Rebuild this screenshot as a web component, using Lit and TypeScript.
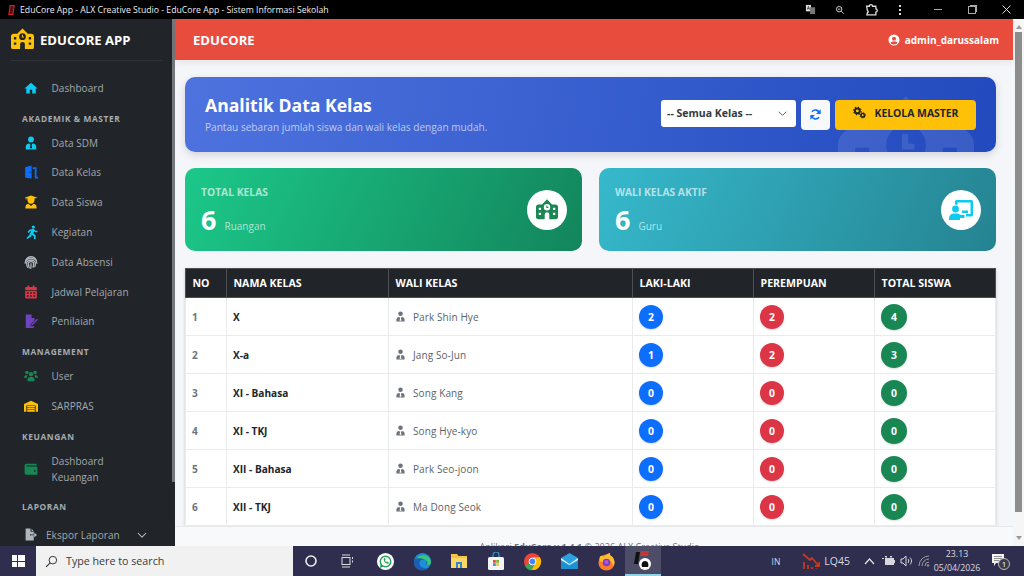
import { LitElement, html, css, svg } from "lit";
import { customElement } from "lit/decorators.js";

const icons: Record<string, unknown> = {
  home: svg`<path d="M12 3 .8 13h3.1v8.500h6V15h4.200v6.500h6V13h3.100z"/>`,
  tie: svg`<circle cx="12" cy="6" r="5"/><path d="M3 23v-4c0-3.500 2.500-6 6-6h.5l1.500 2.500-1 5.500h4l-1-5.500 1.500-2.500h.5c3.500 0 6 2.500 6 6v4z"/>`,
  door: svg`<path d="M2 22V4l11-3v22zM9.500 11v2.500h1.500V11z" fill-rule="evenodd"/><path d="M15 4h6.500v16H24v3h-5.500V7H15z"/>`,
  grad: svg`<path d="M12 1 1 4.500l2 .7v3h1V5.500l2 .6v3c0 3 2.500 5.900 6 5.900s6-2.900 6-5.900v-3l5-1.600z"/><path d="M2.500 23v-2.500c0-3 2-5 5-5.500l4.500 4 4.500-4c3 .5 5 2.500 5 5.500V23z"/>`,
  run: svg`<circle cx="16" cy="3.500" r="2.800"/><path d="m14 7-5 1-3 4 2 1.500 2.300-3 2-.4-2.800 6.400L4 22.500 6 24l6-4.500 1.500-3 3.500 3V24h3v-6l-4-4 1.600-3.500 1.400 2H23v-2.500h-3.500L17 7z"/>`,
  finger: svg`<g fill="none" stroke="currentColor" stroke-width="2.200" stroke-linecap="round"><path d="M3 9c2-4 5-6 9-6s7 2 9 6"/><path d="M2 14c0-6 4-8 10-8s10 2 10 8"/><path d="M6 21c-1-3-1.500-5-1.500-7 0-3.500 3-5 7.500-5s7.500 1.500 7.500 5c0 2-.3 4-1 6"/><path d="M9 22c-1-3-1.500-5.500-1.500-8 0-1.500 2-2.500 4.500-2.500s4.500 1 4.500 3c0 2-.2 4-1 6.500"/><path d="M12 15c0 3 .2 5-.5 8"/></g>`,
  cal: svg`<path fill-rule="evenodd" d="M6 1h3v2.500h6V1h3v2.500h2.500A1.500 1.500 0 0 1 22 5v3.500H2V5a1.500 1.500 0 0 1 1.500-1.500H6zM2 10h20v11.500A1.500 1.500 0 0 1 20.500 23h-17A1.500 1.500 0 0 1 2 21.500zM5 12.500v2.500h3v-2.500zm5.500 0v2.500h3v-2.500zm5.500 0v2.500h3v-2.500zM5 17.500V20h3v-2.500zm5.500 0V20h3v-2.500zm5.500 0V20h3v-2.500z"/>`,
  sign: svg`<path d="M3 1h10v6h5v3.500l-6 6-1.500 4.500H17v3H3z"/><path d="m13 17 9-9 2 2-9 9-3 1z"/>`,
  users: svg`<circle cx="5" cy="6" r="3"/><circle cx="19" cy="6" r="3"/><circle cx="12" cy="9" r="3.700"/><path d="M0 15c0-3 1.500-4.500 3.500-4.500h3c-1 1-1.500 2.500-1.500 4.500zM24 15c0-3-1.500-4.500-3.500-4.500h-3c1 1 1.500 2.500 1.500 4.500zM6 21v-3c0-3 2-4.500 4-4.500h4c2 0 4 1.500 4 4.500v3z"/>`,
  ware: svg`<path d="M0 22V8.500L12 3l12 5.500V22h-4V11H4v11z"/><path d="M5.500 12h13v2.500h-13zM5.500 15.500h13V18h-13zM5.500 19h13v3h-13z"/>`,
  wallet: svg`<path fill-rule="evenodd" d="M4 3h16a2 2 0 0 1 2 2v1H4v1.500h17A2 2 0 0 1 23 9.500V20a2 2 0 0 1-2 2H4a3 3 0 0 1-3-3V6a3 3 0 0 1 3-3zM18.500 13.500a1.500 1.500 0 1 0 0 3 1.500 1.500 0 0 0 0-3z"/>`,
  fileExp: svg`<path d="M3 1h9v6h6v4h-6.500v3H18v9H3z"/><path d="M14 1.500 18 6h-4zM13 12h6V8.500l5 4.500-5 4.500V14h-6z"/>`,
  chev: svg`<path d="m3 8 9 9 9-9" fill="none" stroke="currentColor" stroke-width="2.500" stroke-linecap="round" stroke-linejoin="round"/>`,
  sync: svg`<path d="M19.800 10A8.200 8.200 0 0 0 5.500 6.800M4.200 14A8.200 8.200 0 0 0 18.500 17.200" fill="none" stroke="currentColor" stroke-width="3"/><path d="M21.500 2.500v8.500H13zM2.500 21.500V13H11z"/>`,
  gears: svg`<circle cx="8" cy="9" r="4.500" fill="none" stroke="currentColor" stroke-width="3.500"/><circle cx="8" cy="9" r="7" fill="none" stroke="currentColor" stroke-width="2" stroke-dasharray="2.500 3"/><circle cx="18" cy="17" r="3.200" fill="none" stroke="currentColor" stroke-width="3"/><circle cx="18" cy="17" r="5.300" fill="none" stroke="currentColor" stroke-width="1.500" stroke-dasharray="2 2.200"/>`,
  userCircle: svg`<path fill-rule="evenodd" d="M12 1a11 11 0 1 0 0 22 11 11 0 0 0 0-22zm0 4.500a4 4 0 1 1 0 8 4 4 0 0 1 0-8zm0 15.500a9 9 0 0 1-6.800-3.100c.8-1.800 2.500-2.900 4.300-2.900h5c1.800 0 3.500 1.100 4.300 2.900A9 9 0 0 1 12 21z"/>`,
  school: svg`<path fill-rule="evenodd" d="M12 .4 6.500 6H3a3 3 0 0 0-3 3v11a2 2 0 0 0 2 2h7.500v-5a2.500 2.500 0 0 1 5 0v5H22a2 2 0 0 0 2-2V9a3 3 0 0 0-3-3h-3.500zM12 5.500a3.500 3.500 0 1 1 0 7 3.500 3.500 0 0 1 0-7zM11.300 7v2.800h2.200V8.800h-1.100V7zM3 9.500V12h2.500V9.500zm15.500 0V12H21V9.500zM3 15v2.500h2.500V15zm15.500 0v2.500H21V15z"/>`,
  teacher: svg`<circle cx="6.500" cy="11" r="3.400"/><path d="M0 22v-1.500C0 17.500 2 15.500 4.500 15.500h4l4 1.500h3v3H11V22z"/><path d="M6 6.500V3.500A1.500 1.500 0 0 1 7.500 2H22.500A1.500 1.500 0 0 1 24 3.500V17a1.500 1.500 0 0 1-1.500 1.500H17V16h4.500V4.500H8.500v2.500z"/><path d="M13 12.500h6V15h-6z"/>`,
  search: svg`<circle cx="14.500" cy="9.500" r="7" fill="none" stroke="currentColor" stroke-width="1.800"/><path d="M9.500 14.500 2 22" stroke="currentColor" stroke-width="2"/>`,
  zoom: svg`<circle cx="10" cy="10" r="6.500" fill="none" stroke="currentColor" stroke-width="2.200"/><path d="M15 15l6 6M7 10h6" stroke="currentColor" stroke-width="2.200"/>`,
  ext: svg`<path d="M3 6h5c0-4 6-4 6 0h6v5c3.500 0 3.500 6 0 6v5H3.500l1-4c2 0 2-4 0-4z" fill="none" stroke="currentColor" stroke-width="2.400"/>`,
  translate: svg`<path d="M2 2h11v14H2z"/><path d="M11 7h11v15H11z" fill="#777"/><path d="M5 12l2.500-7L10 12M6 10h3" fill="none" stroke="#111" stroke-width="1.300"/>`,
};

const ic = (name: string, size: number, color = "currentColor") => html`<svg
  class="ic"
  viewBox="0 0 24 24"
  width=${size}
  height=${size}
  fill="currentColor"
  style="color:${color}"
>${icons[name]}</svg>`;

type NavItem = { label?: string; section?: string; icon?: string; color?: string; lines?: string[] };

const nav: NavItem[] = [
  { label: "Dashboard", icon: "home", color: "#0dcaf0" },
  { section: "AKADEMIK & MASTER" },
  { label: "Data SDM", icon: "tie", color: "#0dcaf0" },
  { label: "Data Kelas", icon: "door", color: "#0d6efd" },
  { label: "Data Siswa", icon: "grad", color: "#ffc107" },
  { label: "Kegiatan", icon: "run", color: "#0dcaf0" },
  { label: "Data Absensi", icon: "finger", color: "#adb5bd" },
  { label: "Jadwal Pelajaran", icon: "cal", color: "#dc3545" },
  { label: "Penilaian", icon: "sign", color: "#6f42c1" },
  { section: "MANAGEMENT" },
  { label: "User", icon: "users", color: "#198754" },
  { label: "SARPRAS", icon: "ware", color: "#ffc107" },
  { section: "KEUANGAN" },
  { icon: "wallet", color: "#198754", lines: ["Dashboard", "Keuangan"] },
  { section: "LAPORAN" },
];

const rows = [
  [1, "X", "Park Shin Hye", 2, 2, 4],
  [2, "X-a", "Jang So-Jun", 1, 2, 3],
  [3, "XI - Bahasa", "Song Kang", 0, 0, 0],
  [4, "XI - TKJ", "Song Hye-kyo", 0, 0, 0],
  [5, "XII - Bahasa", "Park Seo-joon", 0, 0, 0],
  [6, "XII - TKJ", "Ma Dong Seok", 0, 0, 0],
];

@customElement("app-root")
export class AppRoot extends LitElement {
  static override styles = css`
    :host {
      display: block;
      width: 1024px;
      height: 576px;
      overflow: hidden;
      font-family: "Open Sans", "Noto Sans", sans-serif;
      color: #212529;
      background: #f4f6f9;
    }
    .ic {
      display: block;
      flex: none;
    }
    .chrome {
      height: 19px;
      background: #000;
      color: #eee;
      display: flex;
      align-items: center;
      padding-left: 9px;
      font-size: 8.700px;
      box-sizing: border-box;
    }
    .chrome .favicon {
      width: 5px;
      height: 10px;
      border: 1.500px solid #d8232a;
      background: #5a0f12;
      box-sizing: border-box;
      margin-right: 6px;
      transform: skewX(-8deg);
    }
    .chrome .actions {
      margin-left: auto;
      display: flex;
      align-items: center;
      color: #ddd;
    }
    .chrome .slot {
      display: flex;
      justify-content: center;
      align-items: center;
    }
    .dots {
      display: flex;
      flex-direction: column;
      gap: 2px;
    }
    .dots i {
      width: 2px;
      height: 2px;
      background: #ddd;
    }
    .min {
      width: 8px;
      height: 1px;
      background: #aaa;
    }
    .restore {
      width: 6px;
      height: 6px;
      border: 1px solid #aaa;
      box-shadow: 1.500px -1.500px 0 -0.500px #aaa;
    }
    .middle {
      height: 527px;
      display: flex;
      overflow: hidden;
    }
    .sidebar {
      width: 172px;
      flex: none;
      background: #212529;
      color: #adb5bd;
      overflow: hidden;
      box-sizing: border-box;
    }
    .sbar {
      width: 3px;
      flex: none;
      background: #212529;
    }
    .sbar i {
      display: block;
      height: 463px;
      background: #74787c;
    }
    .brand {
      height: 42px;
      margin: 0 10px 0 11px;
      display: flex;
      align-items: center;
      gap: 6px;
      border-bottom: 1px solid #2f3338;
      color: #fff;
      font-size: 13.100px;
      font-weight: 700;
      box-sizing: border-box;
    }
    .nav {
      padding-top: 12px;
    }
    .section {
      height: 17px;
      margin: 8px 0 0 22px;
      font-size: 8.400px;
      font-weight: 700;
      letter-spacing: 0.600px;
      line-height: 16px;
      color: #a5abb1;
    }
    .item {
      min-height: 29.800px;
      display: flex;
      align-items: center;
      font-size: 10px;
      letter-spacing: 0.050px;
      color: #a2a8ae;
      padding-left: 22px;
    }
    .item .icw {
      width: 18px;
      display: flex;
      justify-content: center;
      margin-right: 11.500px;
    }
    .item.two {
      padding: 7px 0 6px 22px;
      line-height: 16px;
    }
    .item.export {
      padding-left: 24px;
      margin-top: 4px;
    }
    .item.export .icw {
      width: 13px;
      margin-right: 9px;
    }
    .item.export .arrow {
      margin-left: 17px;
    }
    .main {
      flex: 1;
      min-width: 0;
      display: flex;
      flex-direction: column;
      position: relative;
      background: #f4f6f9;
    }
    .topbar {
      height: 41px;
      flex: none;
      background: #e74c3c;
      color: #fff;
      display: flex;
      align-items: center;
      justify-content: space-between;
      padding: 0 14px 0 18px;
      box-shadow: 0 2px 8px rgba(0, 0, 0, 0.08);
    }
    .topbar b {
      font-size: 13.100px;
    }
    .who {
      display: flex;
      align-items: center;
      gap: 5px;
      font-size: 10px;
      font-weight: 700;
    }
    .content {
      flex: 1;
      padding: 17px 17px 0 10px;
      display: flex;
      flex-direction: column;
    }
    .hero {
      height: 75px;
      flex: none;
      box-sizing: border-box;
      border-radius: 10px;
      background: linear-gradient(100deg, #4e73df, #224abe);
      box-shadow: 0 3px 8px rgba(0, 0, 0, 0.14);
      color: #fff;
      display: flex;
      align-items: center;
      justify-content: space-between;
      padding: 0 20px;
      position: relative;
      overflow: hidden;
    }
    .hero .intro {
      margin-bottom: 2px;
      position: relative;
    }
    .hero h1 {
      margin: 0 0 2px;
      font-size: 17.600px;
      line-height: 25px;
      font-weight: 700;
    }
    .hero p {
      margin: 0;
      font-size: 10.100px;
      color: rgba(255, 255, 255, 0.65);
    }
    .watermark {
      position: absolute;
      right: 22px;
      top: 17px;
      color: rgba(255, 255, 255, 0.1);
    }
    .tools {
      display: flex;
      align-items: flex-start;
      gap: 5px;
      position: relative;
    }
    .select {
      width: 135px;
      height: 27px;
      box-sizing: border-box;
      background: #fff;
      border-radius: 3px;
      color: #343a40;
      display: flex;
      align-items: center;
      justify-content: space-between;
      padding: 0 9px 0 6px;
      font-size: 10.500px;
      font-weight: 700;
    }
    .refresh {
      width: 29px;
      height: 30px;
      background: #f8f9fa;
      border-radius: 4px;
      display: flex;
      align-items: center;
      justify-content: center;
    }
    .master {
      width: 141px;
      height: 30px;
      box-sizing: border-box;
      padding-bottom: 4px;
      background: #ffc107;
      border-radius: 4px;
      color: #212529;
      display: flex;
      align-items: center;
      justify-content: center;
      gap: 9px;
      font-size: 10.400px;
      font-weight: 700;
    }
    .stats {
      display: grid;
      grid-template-columns: 1fr 1fr;
      gap: 17px;
      margin-top: 16px;
      flex: none;
    }
    .stat {
      height: 83px;
      box-sizing: border-box;
      border-radius: 10px;
      color: #fff;
      padding: 0 15px 0 16px;
      display: flex;
      align-items: center;
      justify-content: space-between;
    }
    .stat.green {
      background: linear-gradient(115deg, #1cc88a, #13855c);
    }
    .stat.teal {
      background: linear-gradient(115deg, #36b9cc, #258391);
    }
    .stat .txt {
      padding-top: 11px;
    }
    .stat small {
      display: block;
      font-size: 10.300px;
      font-weight: 700;
      line-height: 13px;
      color: rgba(255, 255, 255, 0.65);
      margin-bottom: 2px;
    }
    .stat .num {
      display: flex;
      align-items: baseline;
      gap: 8px;
      font-size: 27px;
      line-height: 38px;
      font-weight: 700;
    }
    .stat .num span {
      font-size: 10px;
      font-weight: 400;
      color: rgba(255, 255, 255, 0.65);
    }
    .disc {
      width: 40px;
      height: 40px;
      border-radius: 50%;
      background: #fff;
      display: flex;
      align-items: center;
      justify-content: center;
    }
    table {
      margin: 17px 0 0 0;
      width: 810px;
      border-collapse: collapse;
      table-layout: fixed;
      background: #fff;
      box-shadow: 0 1px 3px rgba(0, 0, 0, 0.18);
      flex: none;
    }
    th {
      height: 29px;
      box-sizing: border-box;
      background: #212529;
      color: #fff;
      border: 1px solid #4d5154;
      text-align: left;
      font-size: 10.600px;
      font-weight: 700;
      padding: 0 6.500px;
    }
    td {
      height: 38px;
      box-sizing: border-box;
      border: 1px solid #e9ebec;
      padding: 0 6px;
      font-size: 10.100px;
    }
    td.no {
      font-weight: 700;
      color: #6c757d;
    }
    td.name {
      font-weight: 700;
      color: #212529;
    }
    .wali {
      display: flex;
      align-items: center;
      gap: 7px;
      color: #5c636a;
      font-size: 10px;
      letter-spacing: 0.100px;
    }
    .badge {
      width: 24px;
      height: 24px;
      border-radius: 50%;
      color: #fff;
      font-weight: 700;
      font-size: 10.400px;
      display: flex;
      align-items: center;
      justify-content: center;
      box-shadow: 0 1px 2px rgba(0, 0, 0, 0.15);
    }
    .badge.total {
      width: 26px;
      height: 26px;
    }
    .footer {
      position: absolute;
      left: 0;
      right: 0;
      top: 507px;
      height: 20px;
      box-sizing: border-box;
      border-top: 1px solid #e6e8ea;
      padding-right: 9px;
      text-align: center;
      font-size: 9.050px;
      line-height: 40px;
      overflow: hidden;
      color: #6c757d;
      background: #f8f9fa;
    }
    .vscroll {
      width: 11px;
      flex: none;
      background: #f6f6f6;
      display: flex;
      flex-direction: column;
      align-items: center;
      padding-top: 6px;
      box-sizing: border-box;
    }
    .vscroll i {
      display: block;
      width: 7px;
      height: 480px;
      margin-top: 3px;
      background: #8d8d8d;
    }
    .tri {
      width: 0;
      height: 0;
      border-left: 3.500px solid transparent;
      border-right: 3.500px solid transparent;
    }
    .tri.up {
      border-bottom: 4px solid #9a9a9a;
    }
    .tri.down {
      border-top: 4px solid #9a9a9a;
      margin-top: 24px;
    }
    .taskbar {
      height: 30px;
      background: #2f2e4e;
      color: #e6e6ea;
      display: flex;
      align-items: center;
    }
    .start {
      width: 36px;
      display: flex;
      justify-content: center;
    }
    .win {
      display: grid;
      grid-template-columns: 5.500px 6.500px;
      grid-template-rows: 5.500px 5.500px;
      gap: 1px;
    }
    .win i {
      background: #fff;
    }
    .searchbox {
      width: 257px;
      height: 30px;
      background: #f1f1f1;
      color: #3b3b3b;
      display: flex;
      align-items: center;
      gap: 8px;
      padding-left: 9px;
      box-sizing: border-box;
      font-size: 10.700px;
    }
    .apps {
      display: flex;
    }
    .app {
      width: 36.800px;
      height: 30px;
      display: flex;
      align-items: center;
      justify-content: center;
      box-sizing: border-box;
    }
    .app.sys {
      width: 36px;
    }
    .app.first {
      margin-left: 2px;
    }
    .app.on {
      background: #4e4d68;
      border-bottom: 2px solid #8fd3e8;
    }
    .tray {
      margin-left: auto;
      display: flex;
      align-items: center;
      height: 30px;
      font-size: 9px;
      color: #d9d9e0;
    }
    .tray .lang {
      margin-right: 22px;
      font-size: 8.500px;
    }
    .tray .t1 {
      margin-left: 7px;
    }
    .tray .t2 {
      margin-left: 5px;
    }
    .tray .t3 {
      margin-left: 5px;
    }
    .tray .note {
      margin: 0 13px 0 9px;
    }
    .clock {
      width: 50px;
      margin-left: 1px;
      text-align: center;
      font-size: 8.800px;
      line-height: 14px;
    }
    .lq {
      font-size: 10.500px;
      margin: 0 14px 0 4px;
    }
  `;

  private renderNav(n: NavItem) {
    if (n.section) return html`<div class="section">${n.section}</div>`;
    return html`<div class="item ${n.lines ? "two" : ""}">
      <span class="icw">${ic(n.icon!, 14, n.color)}</span>
      <span>${n.lines ? html`${n.lines[0]}<br />${n.lines[1]}` : n.label}</span>
    </div>`;
  }

  private renderTaskApps() {
    return html`<div class="apps">
      <div class="app sys">
        <svg width="14" height="14" viewBox="0 0 14 14"><circle cx="7" cy="7" r="5" fill="none" stroke="#eee" stroke-width="1.600" /></svg>
      </div>
      <div class="app sys">
        <svg width="14" height="14" viewBox="0 0 14 14" fill="none" stroke="#ddd"><path d="M2 1h8M2 13h8" /><rect x="2" y="3.500" width="8" height="7" /><path d="M12.500 3v2M12.500 6.500v2" /></svg>
      </div>
      <div class="app first">
        <svg width="19" height="19" viewBox="0 0 20 20"><circle cx="10" cy="10" r="9" fill="#fff" /><circle cx="10" cy="10" r="5.500" fill="none" stroke="#25a35a" stroke-width="1.500" /><path d="M4 17l1-4 3 2z" fill="#25a35a" /><path d="M8 7c0 3 2 5 5 5.500l.5-1.500-2-1-1 .5-1-1.500.5-1-1-2z" fill="#25a35a" /></svg>
      </div>
      <div class="app">
        <svg width="19" height="19" viewBox="0 0 20 20"><circle cx="10" cy="10" r="9" fill="#1f8fd6" /><path d="M1 10C3 3 15 1 19 10c0 3-3 4-6 3 2-1 2-4-1-5C8 7 5 11 8 15c2 2 6 3 9 1-3 3-7 4-10 3-4-1-7-5-6-9z" fill="#1a5fb4" /><path d="M19 11c0 2-2 3-5 2.500 1.500-1 1.500-3 .5-4C12 7 5 5 3 8c3-7 16-6 16 3z" fill="#38c77b" /></svg>
      </div>
      <div class="app">
        <svg width="18" height="16" viewBox="0 0 18 16"><path d="M1 1h6l1.500 2H17v12H1z" fill="#f6c445" /><path d="M1 5h16v10H1z" fill="#fbd866" /><rect x="6" y="9" width="6" height="6" fill="#2b88d8" /><rect x="8" y="11" width="2" height="4" fill="#fbd866" /></svg>
      </div>
      <div class="app">
        <svg width="18" height="19" viewBox="0 0 18 19"><path d="M6 5V3a3 3 0 0 1 6 0v2" fill="none" stroke="#2b9fd8" stroke-width="1.200" /><rect x="1" y="5" width="16" height="13" rx="1.500" fill="#f4f4f4" /><rect x="6" y="8" width="2.800" height="2.800" fill="#e74c3c" /><rect x="9.200" y="8" width="2.800" height="2.800" fill="#7cb82f" /><rect x="6" y="11.200" width="2.800" height="2.800" fill="#2b9fd8" /><rect x="9.200" y="11.200" width="2.800" height="2.800" fill="#f6c445" /></svg>
      </div>
      <div class="app">
        <svg width="19" height="19" viewBox="0 0 20 20"><circle cx="10" cy="10" r="9" fill="#e8453c" /><path d="M2 14.500 6 12a4.500 4.500 0 0 0 6 2l-3 5.500a9 9 0 0 1-7-5z" fill="#34a853" /><path d="M10 5.500h7.800A9 9 0 0 1 9 19l4-7a4.500 4.500 0 0 0-3-6.500z" fill="#fbbc05" /><circle cx="10" cy="10" r="3.600" fill="#4285f4" stroke="#fff" /></svg>
      </div>
      <div class="app">
        <svg width="19" height="16" viewBox="0 0 19 16"><path d="M1 5 9.500 0 18 5v11H1z" fill="#2ba3e3" /><path d="M1 5l8.500 6L18 5v2l-8.500 5L1 7z" fill="#d9f1fb" /><path d="M1 8l8.500 5L18 8v8H1z" fill="#1e8fd0" /></svg>
      </div>
      <div class="app">
        <svg width="19" height="19" viewBox="0 0 20 20"><circle cx="10" cy="11" r="8.500" fill="#ff7a2a" /><path d="M3 5c2-2 3-1 4 0 2-2 5-4 7-4-1 2 0 3 2 4 3 3 3 8 1 10-1-5-4-8-8-7-3 1-3 3-3 3-3-1-4-3-3-6z" fill="#ffbd2e" /><circle cx="10" cy="11" r="4" fill="#7542c9" /><circle cx="10" cy="10.500" r="2" fill="#c04fd1" /></svg>
      </div>
      <div class="app on">
        <svg width="20" height="22" viewBox="0 0 20 22"><path d="M3 3h4l-2 12H1z" fill="#111" /><path d="M8 2h8l-1 5H7z" fill="#c7362f" /><circle cx="12" cy="15" r="6" fill="#fff" /><path d="M12 12c3 0 4 3 3 6h-6c-1-3 0-6 3-6z" fill="#111" /></svg>
      </div>
    </div>`;
  }

  private renderTray() {
    return html`<div class="tray">
      <span class="lang">IN</span>
      <svg width="18" height="18" viewBox="0 0 18 18" fill="none" stroke="#c8381f" stroke-width="1.800"><path d="M1 2l7 6 2-2 6 7" /><path d="M13 14h4v-4" /><path d="M2 17v-7M6 17v-4M10 17v-2M14 17v-.5" /></svg>
      <span class="lq">LQ45</span>
      <svg width="11" height="8" viewBox="0 0 11 8" fill="none" stroke="#e6e6ea" stroke-width="1.200"><path d="M1 7l4.500-5L10 7" /></svg>
      <svg class="t1" width="13" height="10" viewBox="0 0 13 10" fill="#d8d8de"><path d="M0 2h2v1H0zM3 2h9v7H3zM12 4h1v3h-1zM3 0h2v1.500H3zM8 0h2v1.500H8z" /></svg>
      <svg class="t2" width="13" height="12" viewBox="0 0 13 12" fill="none" stroke="#d8d8de"><path d="M1 4v4h2l3 3V1L3 4z" /><path d="M8 4c1 1 1 3 0 4M10 2.500c2 2 2 5 0 7" /></svg>
      <svg class="t3" width="13" height="12" viewBox="0 0 13 12" fill="none" stroke="#9a9aa5"><path d="M1 11a10 10 0 0 1 10-10M4 11a7 7 0 0 1 7-7M7 11a4 4 0 0 1 4-4" /><circle cx="10" cy="10.500" r=".8" fill="#9a9aa5" /></svg>
      <div class="clock">23.13<br />05/04/2026</div>
      <svg class="note" width="20" height="18" viewBox="0 0 20 18"><path d="M1 2h12v9H5l-2 3v-3H1z" fill="#f2f2f2" /><path d="M3 4.500h8M3 6.500h8M3 8.500h5" stroke="#777" stroke-width=".8" /><circle cx="13" cy="12" r="5.500" fill="#3a3a50" stroke="#bbb" /><text x="13" y="15" text-anchor="middle" font-size="8" fill="#fff" font-family="Open Sans, sans-serif">1</text></svg>
    </div>`;
  }

  override render() {
    return html`
      <div class="chrome">
        <span class="favicon"></span>
        <span>EduCore App - ALX Creative Studio - EduCore App - Sistem Informasi Sekolah</span>
        <div class="actions">
          <span class="slot" style="width:14px">${ic("translate", 11)}</span>
          <span class="slot" style="width:46px">${ic("zoom", 10)}</span>
          <span class="slot" style="width:16px">${ic("ext", 13)}</span>
          <span class="slot" style="width:42px"><span class="dots"><i></i><i></i><i></i></span></span>
          <span class="slot" style="width:34px"><span class="min"></span></span>
          <span class="slot" style="width:34px"><span class="restore"></span></span>
          <span class="slot" style="width:35px">
            <svg width="9" height="9" viewBox="0 0 9 9" stroke="#ddd"><path d="M.5.5l8 8M8.500.5l-8 8" /></svg>
          </span>
        </div>
      </div>
      <div class="middle">
        <aside class="sidebar">
          <div class="brand">${ic("school", 23, "#ffc107")}<span>EDUCORE APP</span></div>
          <div class="nav">
            ${nav.map((n) => this.renderNav(n))}
            <div class="item export">
              <span class="icw">${ic("fileExp", 13, "#adb5bd")}</span>
              <span>Ekspor Laporan</span>
              <span class="arrow">${ic("chev", 10, "#adb5bd")}</span>
            </div>
          </div>
        </aside>
        <div class="sbar"><i></i></div>
        <main class="main">
          <header class="topbar">
            <b>EDUCORE</b>
            <span class="who">${ic("userCircle", 12)}admin_darussalam</span>
          </header>
          <div class="content">
            <section class="hero">
              <span class="watermark">${ic("school", 136)}</span>
              <div class="intro">
                <h1>Analitik Data Kelas</h1>
                <p>Pantau sebaran jumlah siswa dan wali kelas dengan mudah.</p>
              </div>
              <div class="tools">
                <div class="select"><span>-- Semua Kelas --</span>${ic("chev", 9, "#555")}</div>
                <div class="refresh">${ic("sync", 13, "#0d6efd")}</div>
                <div class="master">${ic("gears", 13)}<span>KELOLA MASTER</span></div>
              </div>
            </section>
            <div class="stats">
              <div class="stat green">
                <div class="txt">
                  <small>TOTAL KELAS</small>
                  <div class="num">6 <span>Ruangan</span></div>
                </div>
                <div class="disc">${ic("school", 22, "#198754")}</div>
              </div>
              <div class="stat teal">
                <div class="txt">
                  <small>WALI KELAS AKTIF</small>
                  <div class="num">6 <span>Guru</span></div>
                </div>
                <div class="disc">${ic("teacher", 24, "#0dcaf0")}</div>
              </div>
            </div>
            <table>
              <colgroup>
                <col style="width:41px" />
                <col style="width:162px" />
                <col style="width:244px" />
                <col style="width:121px" />
                <col style="width:121px" />
                <col style="width:121px" />
              </colgroup>
              <thead>
                <tr>
                  <th>NO</th>
                  <th>NAMA KELAS</th>
                  <th>WALI KELAS</th>
                  <th>LAKI-LAKI</th>
                  <th>PEREMPUAN</th>
                  <th>TOTAL SISWA</th>
                </tr>
              </thead>
              <tbody>
                ${rows.map(
                  (r) => html`<tr>
                    <td class="no">${r[0]}</td>
                    <td class="name">${r[1]}</td>
                    <td><span class="wali">${ic("tie", 11, "#6c757d")}${r[2]}</span></td>
                    <td><span class="badge" style="background:#0d6efd">${r[3]}</span></td>
                    <td><span class="badge" style="background:#dc3545">${r[4]}</span></td>
                    <td><span class="badge total" style="background:#198754">${r[5]}</span></td>
                  </tr>`
                )}
              </tbody>
            </table>
          </div>
          <div class="footer">Aplikasi <b>EduCore v 1.4.1</b> © 2026 ALX Creative Studio</div>
        </main>
        <div class="vscroll">
          <span class="tri up"></span>
          <i></i>
          <span class="tri down"></span>
        </div>
      </div>
      <div class="taskbar">
        <div class="start"><span class="win"><i></i><i></i><i></i><i></i></span></div>
        <div class="searchbox">${ic("search", 13, "#333")}<span>Type here to search</span></div>
        ${this.renderTaskApps()} ${this.renderTray()}
      </div>
    `;
  }
}

declare global {
  interface HTMLElementTagNameMap {
    "app-root": AppRoot;
  }
}
